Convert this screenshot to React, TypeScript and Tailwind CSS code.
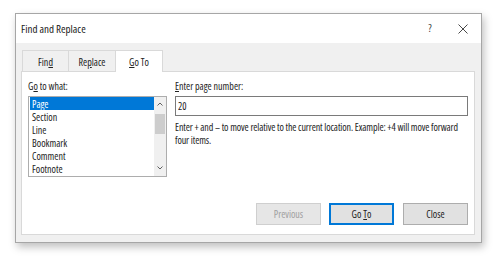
import React, { useState } from 'react'

const items = ['Page', 'Section', 'Line', 'Bookmark', 'Comment', 'Footnote']

function Tab({ label, active }: { label: React.ReactNode, active?: boolean }) {
    return (
        <div className={`flex items-center justify-center h-[21px] ${active ? 'bg-white border border-b-0 border-[#d9d9d9] -mb-px h-[22px] relative z-10' : 'bg-[#f0f0f0] border border-b-0 border-[#d9d9d9] -mr-px'} text-[10px] text-[#222]`}>
            {label}
        </div>
    )
}

function App() {
    const [selected, setSelected] = useState(0)
    const [page, setPage] = useState('20')

    return (
        <div className="w-[502px] h-[264px] bg-white pl-[15px] pt-[13px] font-stretch-condensed" style={{ fontFamily: '"Open Sans", "Liberation Sans", Arial, sans-serif' }}>
            <div className="w-[467px] h-[230px] border border-[#a6a6a6] bg-[#f0f0f0] flex flex-col shadow-[2px_4px_8px_rgba(0,0,0,0.25)]">
                {/* title bar */}
                <div className="h-[29px] bg-white flex items-center pl-[5px] pr-[12px] shrink-0">
                    <span className="text-[11px] text-[#1a1a1a] flex-1 pt-px">Find and Replace</span>
                    <span className="text-[11px] text-[#333] w-[10px] text-center mr-[23px]">?</span>
                    <svg width="10" height="10" viewBox="0 0 10 10" className="mr-[1px]">
                        <path d="M0.5 0.5 L9.5 9.5 M9.5 0.5 L0.5 9.5" stroke="#333" strokeWidth="0.9" fill="none" />
                    </svg>
                </div>

                <div className="flex-1 flex flex-col pl-[5px] pr-[6px] pt-[7px] pb-[7px]">
                    {/* tabs */}
                    <div className="flex items-end pl-[1px] h-[21px]">
                        <div className="w-[46px]"><Tab label={<span className="pt-[2px]">Fin<u>d</u></span>} /></div>
                        <div className="w-[47px]"><Tab label={<span className="pt-[2px]">Re<u>p</u>lace</span>} /></div>
                        <div className="w-[48px]"><Tab active label={<span className="pt-[2px]"><u>G</u>o To</span>} /></div>
                    </div>

                    {/* panel */}
                    <div className="flex-1 bg-white border border-[#d9d9d9] flex flex-col px-[6px] pt-[8px] pb-[9px]">
                        <div className="flex gap-[8px]">
                            <div className="w-[139px] flex flex-col">
                                <div className="text-[10px] text-[#222] leading-[13px] mb-[3px]">G<u>o</u> to what:</div>
                                <div className="h-[81px] border border-[#adadad] flex bg-white">
                                    <div className="flex-1 flex flex-col pl-px overflow-hidden">
                                        {items.map((it, i) => (
                                            <div
                                                key={it}
                                                onClick={() => setSelected(i)}
                                                className={`h-[13.2px] shrink-0 pt-[1.5px] leading-[11.7px] text-[10px] pl-[2px] ${i === selected ? 'bg-[#0078d7] text-white' : 'text-[#222]'}`}
                                            >
                                                {it}
                                            </div>
                                        ))}
                                    </div>
                                    <div className="w-[12px] bg-[#f0f0f0] flex flex-col items-center">
                                        <svg width="12" height="17" viewBox="0 0 12 17">
                                            <path d="M3.5 8.5 L6 6 L8.5 8.5" stroke="#606060" strokeWidth="1" fill="none" />
                                        </svg>
                                        <div className="w-[10px] h-[20px] bg-[#cdcdcd]" />
                                        <div className="flex-1" />
                                        <svg width="12" height="17" viewBox="0 0 12 17">
                                            <path d="M3.5 7.5 L6 10 L8.5 7.5" stroke="#606060" strokeWidth="1" fill="none" />
                                        </svg>
                                    </div>
                                </div>
                            </div>

                            <div className="flex-1 flex flex-col">
                                <div className="text-[10px] text-[#222] leading-[13px] mb-[3px]"><u>E</u>nter page number:</div>
                                <div className="h-[20px] border border-[#7a7a7a] flex items-center pl-[2px]">
                                    <input
                                        value={page}
                                        onChange={e => setPage(e.target.value)}
                                        className="w-full text-[10px] text-[#222] outline-none bg-transparent"
                                    />
                                </div>
                                <p className="text-[10px] text-[#222] leading-[13px] mt-[5px] tracking-[-0.1px]">
                                    Enter + and – to move relative to the current location. Example: +4 will move forward four items.
                                </p>
                            </div>
                        </div>

                        <div className="flex-1" />

                        <div className="flex justify-end gap-[8px]">
                            <button disabled className="w-[65px] h-[22px] bg-[#e6e6e6] border border-[#cfcfcf] text-[10px] text-[#a0a0a0]">Previous</button>
                            <button className="w-[65px] h-[22px] bg-[#e1e1e1] border-2 border-[#0078d7] text-[10px] text-[#222]">Go <u>T</u>o</button>
                            <button className="w-[65px] h-[22px] bg-[#e1e1e1] border border-[#adadad] text-[10px] text-[#222] ml-px">Close</button>
                        </div>
                    </div>
                </div>
            </div>
        </div>
    )
}

export default App
